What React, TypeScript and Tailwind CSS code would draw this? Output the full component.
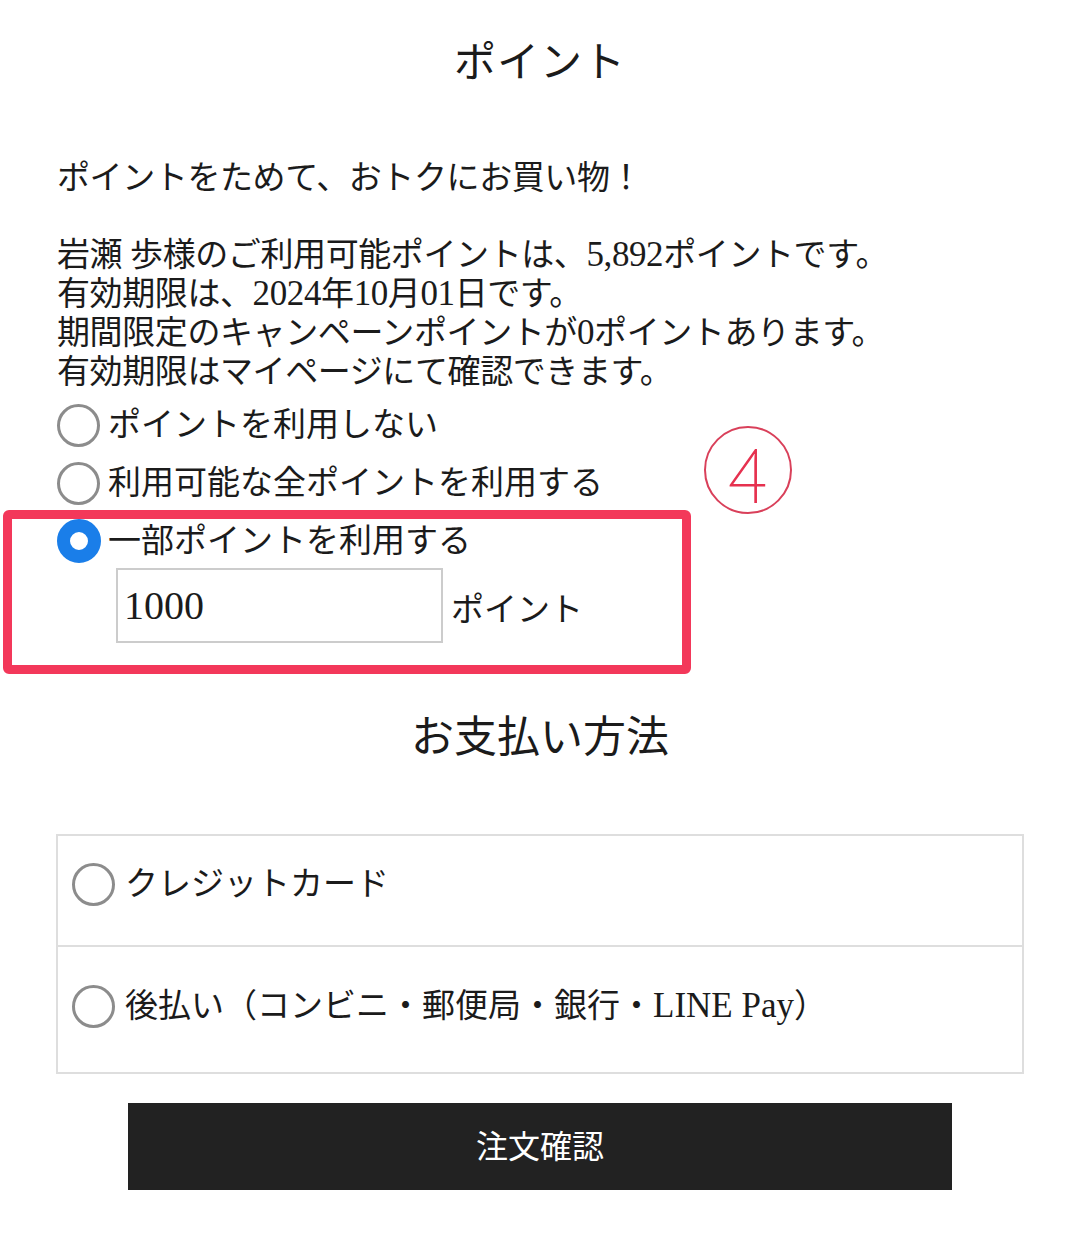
import React from "react";

const serif = "font-['Liberation_Serif','Noto_Sans_CJK_JP',serif]";

function Radio({ checked = false }: { checked?: boolean }) {
  if (checked) {
    return (
      <span className="box-border inline-block h-[44px] w-[44px] shrink-0 rounded-full border-[13px] border-[#1a7ee9] bg-white" />
    );
  }
  return (
    <span className="box-border inline-block h-[43px] w-[43px] shrink-0 rounded-full border-[3.5px] border-[#8c8c8c] bg-white" />
  );
}

// latin runs are set a little larger, like the reference's mincho
function L({ children }: { children: React.ReactNode }) {
  return <span className="text-[35px] leading-[0]">{children}</span>;
}

export default function App() {
  return (
    <div className={`relative min-h-[1254px] w-[1080px] bg-white text-[#1b1b1b] ${serif}`}>
      <div className="px-[57px]">
        <h1 className="pt-[38px] text-center text-[42px] leading-[50px] tracking-[1px]">ポイント</h1>

        <p className="mt-[71px] text-[33px] leading-[38.7px] tracking-[-0.4px]">
          ポイントをためて、おトクにお買い物！
          <br />
          <br />
          岩瀬 歩様のご利用可能ポイントは、<L>5,892</L>ポイントです。
          <br />
          有効期限は、<L>2024</L>年<L>10</L>月<L>01</L>日です。
          <br />
          期間限定のキャンペーンポイントが<L>0</L>ポイントあります。
          <br />
          有効期限はマイページにて確認できます。
        </p>

        <div className="mt-[5px] text-[33px]">
          <label className="flex h-[58px] items-center">
            <Radio />
            <span className="ml-[8px] leading-none">ポイントを利用しない</span>
          </label>
          <label className="flex h-[58px] items-center">
            <Radio />
            <span className="ml-[8px] leading-none">利用可能な全ポイントを利用する</span>
          </label>
          <label className="flex h-[58px] items-center">
            <Radio checked />
            <span className="ml-[7px] leading-none">一部ポイントを利用する</span>
          </label>
          <div className="-mt-[2px] flex items-center pl-[59px]">
            <div className="box-border flex h-[75px] w-[327px] items-center border-2 border-[#cccccc] px-[6px] text-[40px] leading-none">
              1000
            </div>
            <span className="ml-[8px] pt-[10px] leading-none">ポイント</span>
          </div>
        </div>

        <h2 className="mt-[70px] text-center text-[43px] leading-[50px]">お支払い方法</h2>

        <div className="mt-[71px] box-border w-[968px] -translate-x-[1px] border-2 border-[#dedede] text-[33px]">
          <label className="box-border flex h-[111px] items-start border-b-2 border-[#dedede] pl-[14px] pt-[27px]">
            <Radio />
            <span className="ml-[10px] leading-[43px]">クレジットカード</span>
          </label>
          <label className="box-border flex h-[125px] items-start pl-[14px] pt-[38px]">
            <Radio />
            <span className="ml-[10px] leading-[43px]">
              後払い（コンビニ・郵便局・銀行・<L>LINE Pay</L>）
            </span>
          </label>
        </div>

        <div className="mt-[29px] flex justify-center">
          <button className="flex h-[87px] w-[824px] items-center justify-center bg-[#222222] text-[32px] text-white">
            注文確認
          </button>
        </div>
      </div>

      {/* annotation overlay */}
      <div className="pointer-events-none absolute left-[3px] top-[510px] h-[164px] w-[688px] rounded-[6px] border-[9px] border-[#f3385a]" />
      <div className="pointer-events-none absolute left-[704px] top-[426px] flex h-[88px] w-[88px] items-center justify-center rounded-full border-2 border-[#d9405a]">
        <span className="font-['Noto_Sans_CJK_JP',sans-serif] text-[76px] font-thin leading-none text-[#e6314f]">4</span>
      </div>
    </div>
  );
}
